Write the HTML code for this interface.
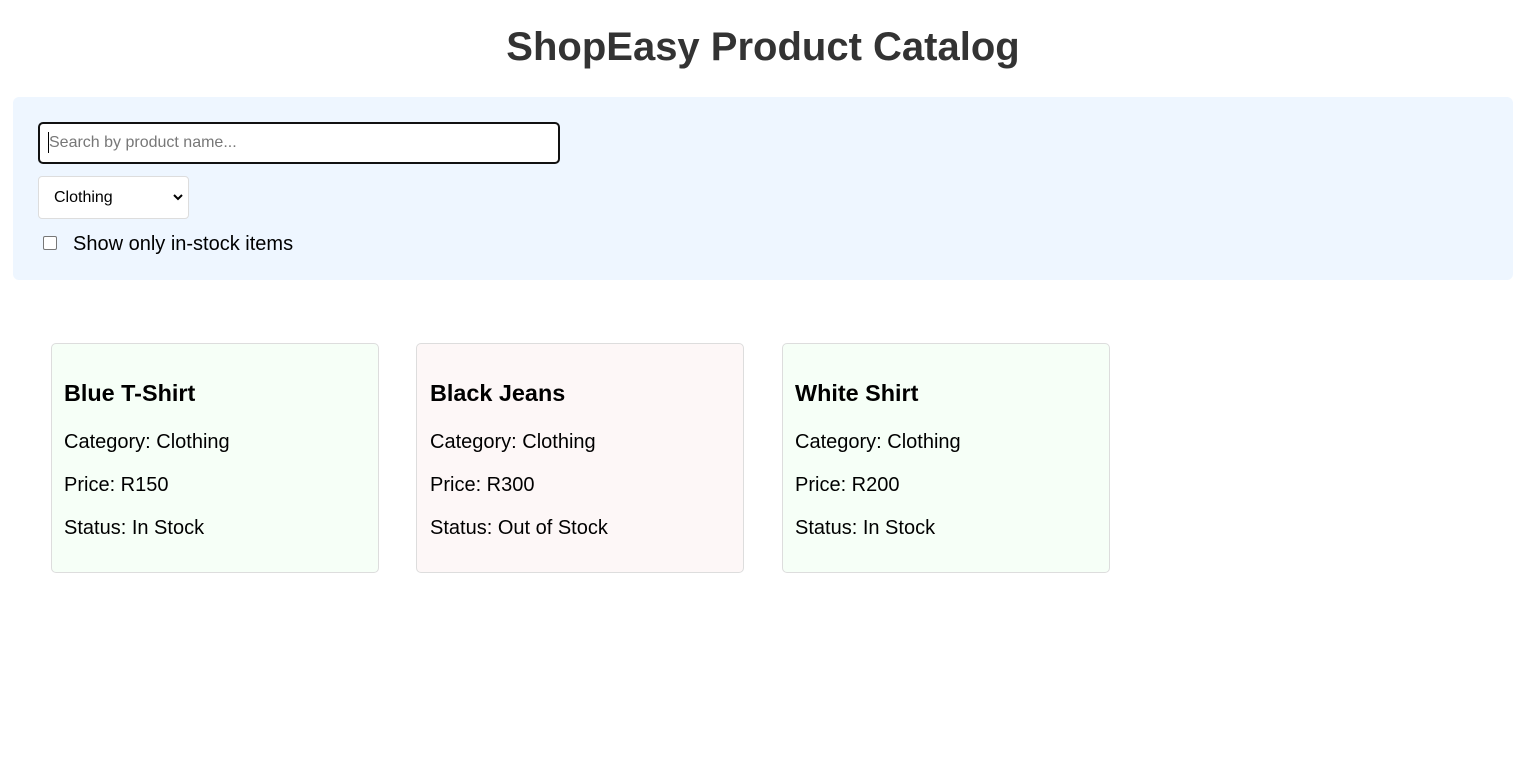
<!DOCTYPE html>
<html><head><style>
body{margin:0;width:1523px;height:780px;background:#fff;font-family:"Liberation Sans",Arial,sans-serif;position:relative;overflow:hidden}
.a{position:absolute;white-space:nowrap}
h1{position:absolute;left:0;width:1526px;text-align:center;top:25px;margin:0;font-size:40px;font-weight:bold;color:#333}
.panel{position:absolute;left:13px;top:97px;width:1500px;height:183px;background:#eef6ff;border-radius:6px}
.inp{position:absolute;left:38px;top:122px;width:518px;height:38px;border:2px solid #111;border-radius:5px;background:#fff}
.sel{position:absolute;left:38px;top:176px;width:149px;height:41px;border:1px solid #ddd;border-radius:4px;background:#fff}
.cb{position:absolute;left:43px;top:236px;width:12px;height:12px;border:1px solid #777;border-radius:2px;background:#fff}
.card{position:absolute;top:343px;width:326px;height:228px;border:1px solid #ddd;border-radius:5px}
.card .t{position:absolute;left:12px;top:36px;font-size:23.4px;font-weight:bold;color:#000}
.card .l{position:absolute;left:12px;font-size:20px;color:#000}
</style></head><body>
<h1>ShopEasy Product Catalog</h1>
<div class="panel"></div>
<div class="inp"></div>
<div class="a" style="left:49px;top:134px;font-size:16px;color:#777">Search by product name...</div>
<div class="a" style="left:48px;top:132px;width:1px;height:21px;background:#000"></div>
<div class="sel"></div>
<div class="a" style="left:54px;top:189px;font-size:16px;color:#000">Clothing</div>
<svg class="a" style="left:172px;top:193px" width="12" height="8" viewBox="0 0 12 8"><path d="M2 2l4 4 4-4" stroke="#000" stroke-width="2" fill="none"/></svg>
<div class="cb"></div>
<div class="a" style="left:73px;top:233px;font-size:20px;color:#000">Show only in-stock items</div>

<div class="card" style="left:51px;background:#f6fff7">
<div class="t">Blue T-Shirt</div>
<div class="l" style="top:87px">Category: Clothing</div>
<div class="l" style="top:130px">Price: R150</div>
<div class="l" style="top:173px">Status: In Stock</div>
</div>
<div class="card" style="left:416px;background:#fdf7f7">
<div class="t" style="left:13px">Black Jeans</div>
<div class="l" style="top:87px;left:13px">Category: Clothing</div>
<div class="l" style="top:130px;left:13px">Price: R300</div>
<div class="l" style="top:173px;left:13px">Status: Out of Stock</div>
</div>
<div class="card" style="left:782px;background:#f6fff7">
<div class="t">White Shirt</div>
<div class="l" style="top:87px">Category: Clothing</div>
<div class="l" style="top:130px">Price: R200</div>
<div class="l" style="top:173px">Status: In Stock</div>
</div>
</body></html>
